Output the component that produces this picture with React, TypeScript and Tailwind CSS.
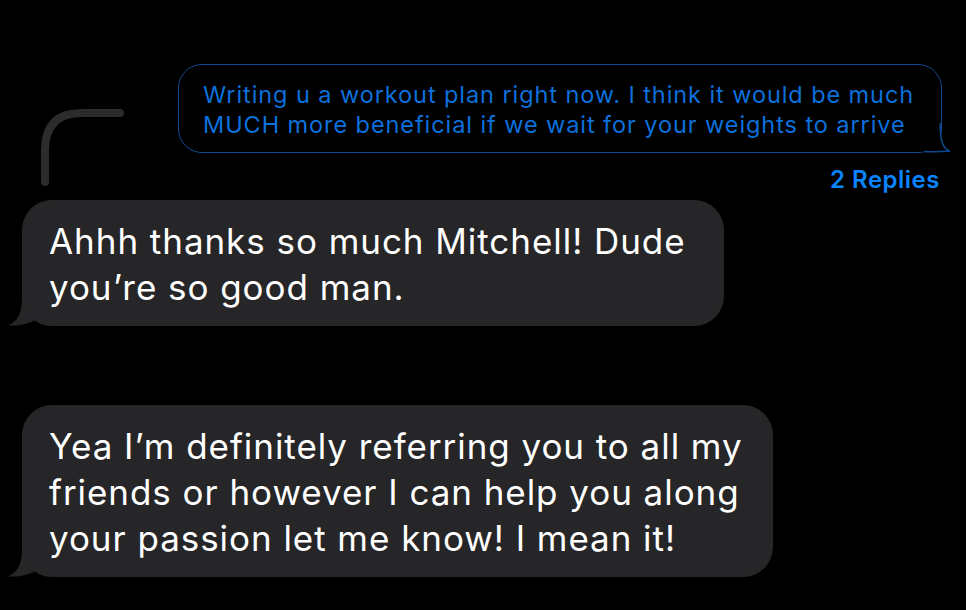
import React from "react";

const font = { fontFamily: '"Inter", "Liberation Sans", sans-serif' };

function GrayTail() {
  return (
    <svg
      className="absolute left-[-14px] bottom-0"
      width="40"
      height="30"
      viewBox="0 0 40 30"
    >
      <path d="M14 0 C14 14 12 24 0 29.5 C12 30 22 28 30 22 L40 22 L40 0 Z" fill="#262628" />
    </svg>
  );
}

function GrayBubble({ lines, width }: { lines: string[]; width: string }) {
  return (
    <div className={`relative ${width}`}>
      <div className="relative z-10 rounded-[30px] bg-[#262628] pl-[27px] pt-[18px] pb-[16px] text-[35px] leading-[46px] text-white tracking-[0.95px]">
        {lines.map((l, i) => (
          <div key={i} className="whitespace-nowrap">{l}</div>
        ))}
      </div>
      <GrayTail />
    </div>
  );
}

export default function App() {
  return (
    <div className="relative min-h-[610px] w-[966px] overflow-hidden bg-black" style={font}>
      <svg className="absolute left-[38px] top-[106px]" width="90" height="84" viewBox="0 0 90 84">
        <path
          d="M7 76 L7 44 Q7 7 44 7 L82 7"
          fill="none"
          stroke="#2c2c2e"
          strokeWidth="8"
          strokeLinecap="round"
        />
      </svg>
      <div className="flex flex-col pt-[64px]">
        <div className="flex justify-end pr-[24px]">
          <div className="relative w-[764px]">
            <div className="relative z-10 h-[89px] rounded-[24px] border-[1.5px] border-[#0c4a8f] bg-black pl-[24px] pt-[15px] text-[23.5px] leading-[30px] text-[#0b70dc] tracking-[0.92px]">
              <div className="whitespace-nowrap">Writing u a workout plan right now. I think it would be much</div>
              <div className="whitespace-nowrap">MUCH more beneficial if we wait for your weights to arrive</div>
            </div>
            <svg className="absolute right-[-10px] bottom-[0px] z-20" width="32" height="30" viewBox="0 0 32 30">
              <path d="M0 28.5 L31 28.5 C22 26 20 18 20.5 0" fill="black" stroke="none" />
              <path d="M4 28.5 C16 29 23 28.5 30 28.2 C22 25 20 16 20.2 0" fill="none" stroke="#0c4a8f" strokeWidth="1.5" />
            </svg>
          </div>
        </div>
        <div className="flex justify-end pr-[26px] pt-[12px] text-[24px] font-semibold leading-[30px] text-[#0a84ff] tracking-[0.5px]">
          2 Replies
        </div>
        <div className="pl-[22px] pt-[5px]">
          <GrayBubble
            width="w-[702px]"
            lines={["Ahhh thanks so much Mitchell! Dude", "you\u2019re so good man."]}
          />
        </div>
        <div className="pl-[22px] pt-[79px]">
          <GrayBubble
            width="w-[751px]"
            lines={[
              "Yea I\u2019m definitely referring you to all my",
              "friends or however I can help you along",
              "your passion let me know! I mean it!",
            ]}
          />
        </div>
      </div>
    </div>
  );
}
